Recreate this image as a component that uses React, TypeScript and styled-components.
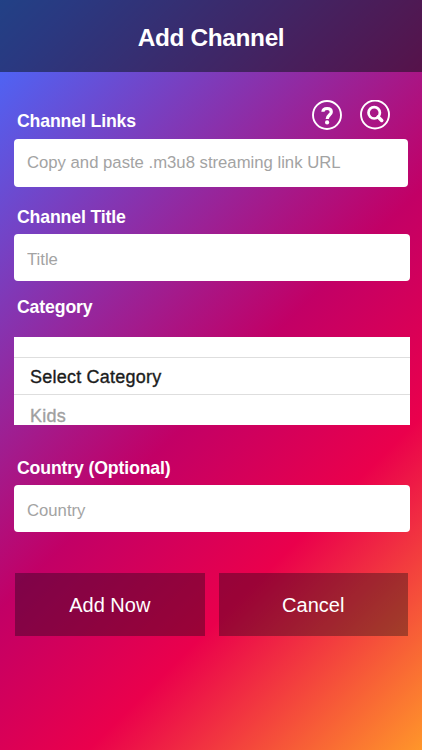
import React from "react";
import styled, { createGlobalStyle } from "styled-components";

const GlobalStyle = createGlobalStyle`
  * { box-sizing: border-box; }
  body { margin: 0; }
`;

const Screen = styled.div`
  width: 422px;
  height: 750px;
  display: flex;
  flex-direction: column;
  overflow: hidden;
  font-family: "Liberation Sans", Arial, sans-serif;
  background: linear-gradient(135deg, #4072fc 0%, #5062f2 6.5%, #c20066 52%, #ea004c 71.5%, #ff962a 100%);
`;

const Header = styled.header`
  height: 72px;
  flex: none;
  padding-top: 3px;
  display: flex;
  align-items: center;
  justify-content: center;
  background: rgba(4, 16, 16, 0.5);
`;

const Title = styled.h1`
  margin: 0;
  font-size: 24.4px;
  line-height: 30px;
  font-weight: 700;
  letter-spacing: -0.35px;
  color: #fff;
`;

const Form = styled.form`
  display: flex;
  flex-direction: column;
  padding: 24px 12px 0 14px;
`;

const LabelRow = styled.div<{ $height: number; $below?: number }>`
  height: ${(p) => p.$height}px;
  padding: 0 20px ${(p) => p.$below ?? 6}px 3px;
  display: flex;
  align-items: flex-end;
  justify-content: space-between;
`;

const Label = styled.label`
  font-size: 17.7px;
  line-height: 22px;
  font-weight: 700;
  letter-spacing: -0.15px;
  color: #fff;
  white-space: nowrap;
`;

const Actions = styled.div`
  display: flex;
  gap: 18px;
  padding-bottom: 1px;
`;

const IconButton = styled.button`
  padding: 0;
  border: 0;
  background: none;
  display: block;
  width: 30px;
  height: 31px;
  svg { display: block; }
`;

const Input = styled.input<{ $height: number; $inset?: number; $drop?: number }>`
  height: ${(p) => p.$height}px;
  margin-right: ${(p) => p.$inset ?? 0}px;
  padding: ${(p) => p.$drop ?? 0}px 13px 0;
  border: 0;
  border-radius: 4px;
  outline: 0;
  background: #fff;
  color: #222;
  font: 16.7px "Liberation Sans", Arial, sans-serif;
  &::placeholder { color: #a3a3a3; opacity: 1; }
`;

const Picker = styled.div`
  height: 88px;
  overflow: hidden;
  background: #fff;
  padding-top: 20px;
`;

const Option = styled.div<{ $selected?: boolean }>`
  height: 38px;
  padding: ${(p) => (p.$selected ? 1 : 3)}px 16px 0;
  border: 0 solid #dedede;
  border-width: ${(p) => (p.$selected ? "1px 0" : "0")};
  font-size: 18px;
  line-height: 37px;
  letter-spacing: 0.22px;
  color: ${(p) => (p.$selected ? "#1c1c1c" : "#a0a0a0")};
  -webkit-text-stroke: 0.35px currentColor;
`;

const Buttons = styled.div`
  display: grid;
  grid-template-columns: 1fr 1fr;
  gap: 14px;
  margin: 41px 2px 0 1px;
`;

const Button = styled.button`
  height: 63px;
  padding: 2px 0 0;
  border: 0;
  background: rgba(4, 8, 14, 0.34);
  color: #fff;
  font: 20px "Liberation Sans", Arial, sans-serif;
`;

const HelpIcon = () => (
  <svg width="30" height="31" viewBox="0 0 30 31" fill="none" stroke="#fff">
    <circle cx="15" cy="15" r="14" strokeWidth="1.9" />
    <path d="M10.9 11.7C11 9.3 12.7 8.5 15.1 8.5c2.6 0 4.2 1.4 4.2 3.5 0 3-4.1 3.2-4.1 7" strokeWidth="3.2" />
    <circle cx="15.1" cy="22.4" r="2.1" fill="#fff" stroke="none" />
  </svg>
);

const SearchIcon = () => (
  <svg width="30" height="31" viewBox="0 0 30 31" fill="none" stroke="#fff">
    <circle cx="15" cy="14.5" r="14" strokeWidth="1.9" />
    <circle cx="14.2" cy="12.8" r="5.7" strokeWidth="2.7" />
    <path d="M18.2 16.9l3.5 3.5" strokeWidth="3.6" strokeLinecap="round" />
  </svg>
);

export default function App() {
  return (
    <>
      <GlobalStyle />
      <Screen>
        <Header>
          <Title>Add Channel</Title>
        </Header>
        <Form>
          <LabelRow $height={43} $below={7}>
            <Label>Channel Links</Label>
            <Actions>
              <IconButton type="button" aria-label="Help"><HelpIcon /></IconButton>
              <IconButton type="button" aria-label="Search"><SearchIcon /></IconButton>
            </Actions>
          </LabelRow>
          <Input $height={48} $inset={2} $drop={0} placeholder="Copy and paste .m3u8 streaming link URL" />
          <LabelRow $height={47}>
            <Label>Channel Title</Label>
          </LabelRow>
          <Input $height={47} $drop={4} placeholder="Title" />
          <LabelRow $height={56} $below={19}>
            <Label>Category</Label>
          </LabelRow>
          <Picker>
            <Option $selected>Select Category</Option>
            <Option>Kids</Option>
          </Picker>
          <LabelRow $height={60}>
            <Label>Country (Optional)</Label>
          </LabelRow>
          <Input $height={47} $drop={4} placeholder="Country" />
          <Buttons>
            <Button type="button">Add Now</Button>
            <Button type="button">Cancel</Button>
          </Buttons>
        </Form>
      </Screen>
    </>
  );
}
